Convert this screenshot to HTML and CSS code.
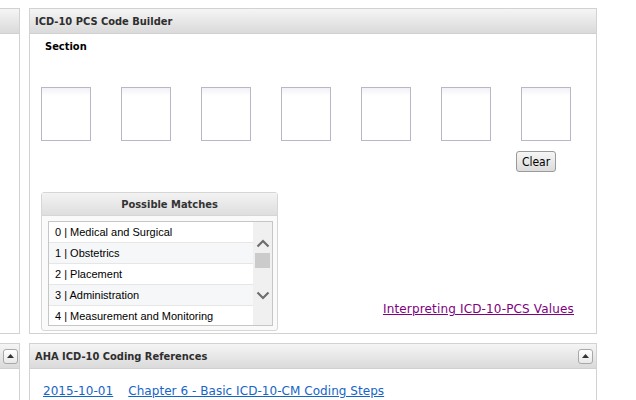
FILE: index.html
```html
<!DOCTYPE html>
<html>
<head>
<meta charset="utf-8">
<link rel="stylesheet" href="styles.css">
</head>
<body>
<div class="page">
  <div class="row row-top">
    <div class="side">
      <div class="side-head"></div>
      <div class="side-body"></div>
    </div>
    <div class="panel">
      <div class="panel-head"><span class="title">ICD-10 PCS Code Builder</span></div>
      <div class="panel-body builder">
        <div class="section-label">Section</div>
        <div class="boxes">
          <div class="box"></div><div class="box"></div><div class="box"></div><div class="box"></div><div class="box"></div><div class="box"></div><div class="box"></div>
        </div>
        <div class="clear-row"><button class="clear">Clear</button></div>
        <div class="bottom">
          <div class="matches">
            <div class="matches-head">Possible Matches</div>
            <div class="list">
              <div class="items">
                <div class="item">0 | Medical and Surgical</div>
                <div class="item alt">1 | Obstetrics</div>
                <div class="item">2 | Placement</div>
                <div class="item alt">3 | Administration</div>
                <div class="item">4 | Measurement and Monitoring</div>
              </div>
              <div class="scroll">
                <svg class="chev up" width="14" height="9" viewBox="0 0 14 9"><path d="M1.5 7.5 L7 2 L12.5 7.5" fill="none" stroke="#6e6e6e" stroke-width="2.2"/></svg>
                <div class="thumb"></div>
                <svg class="chev down" width="14" height="9" viewBox="0 0 14 9"><path d="M1.5 1.5 L7 7 L12.5 1.5" fill="none" stroke="#6e6e6e" stroke-width="2.2"/></svg>
              </div>
            </div>
          </div>
          <a class="visited" href="#">Interpreting ICD-10-PCS Values</a>
        </div>
      </div>
    </div>
  </div>
  <div class="row row-bottom">
    <div class="side">
      <div class="side-head"><span class="tog"><svg width="7" height="4" viewBox="0 0 7 4"><path d="M0 4 L3.5 0 L7 4 Z" fill="#333"/></svg></span></div>
      <div class="side-body"></div>
    </div>
    <div class="panel">
      <div class="panel-head"><span class="title">AHA ICD-10 Coding References</span><span class="tog"><svg width="7" height="4" viewBox="0 0 7 4"><path d="M0 4 L3.5 0 L7 4 Z" fill="#333"/></svg></span></div>
      <div class="panel-body refs">
        <a class="link" href="#">2015-10-01</a>
        <a class="link" href="#">Chapter 6 - Basic ICD-10-CM Coding Steps</a>
      </div>
    </div>
  </div>
</div>
</body>
</html>
```

FILE: styles.css
```css
html, body {
  margin: 0;
  padding: 0;
  background: #ffffff;
  overflow: hidden;
}
.page {
  padding-top: 8px;
  width: 636px;
  height: 392px;
  overflow: hidden;
  font-family: "DejaVu Sans", Verdana, sans-serif;
}
.row {
  display: flex;
  gap: 9px;
}
.row-bottom {
  margin-top: 9px;
}
.side {
  width: 19px;
  border-top: 1px solid #d2d2d2;
  border-right: 1px solid #d2d2d2;
  border-bottom: 1px solid #d2d2d2;
  display: flex;
  flex-direction: column;
}
.side-head {
  height: 24px;
  border-bottom: 1px solid #d0d0d0;
  background: linear-gradient(#f5f5f5, #dadada);
  display: flex;
  align-items: center;
  padding-left: 3px;
}
.side-body {
  flex: 1;
  background: #fff;
}
.row-top .side-body { height: 299px; }
.panel {
  width: 566px;
  border: 1px solid #d2d2d2;
  display: flex;
  flex-direction: column;
}
.panel-head {
  height: 24px;
  border-bottom: 1px solid #d0d0d0;
  background: linear-gradient(#f5f5f5, #dadada);
  display: flex;
  align-items: center;
  justify-content: space-between;
  padding: 0 3px 0 5px;
}
.title {
  font-family: "DejaVu Sans Condensed", "DejaVu Sans", sans-serif;
  font-weight: bold;
  font-size: 11px;
  color: #2e2e2e;
}
.tog {
  width: 13px;
  height: 13px;
  border: 1px solid #a8a8a8;
  border-radius: 3px;
  background: linear-gradient(#ffffff, #e8e8e8);
  display: flex;
  align-items: center;
  justify-content: center;
}
.tog svg { display: block; margin-top: -1px; }
.panel-body {
  background: #fff;
}
.builder {
  height: 299px;
  display: flex;
  flex-direction: column;
  padding: 0 0 0 11px;
  box-sizing: border-box;
}
.section-label {
  font-family: "DejaVu Sans Condensed", "DejaVu Sans", sans-serif;
  font-weight: bold;
  font-size: 11px;
  color: #000;
  margin: 6px 0 0 4px;
  line-height: 13px;
}
.boxes {
  display: flex;
  gap: 30px;
  margin-top: 34px;
}
.box {
  width: 48px;
  height: 52px;
  border: 1px solid #b7b7c8;
  background: linear-gradient(#f2f2f7 0, #ffffff 8px);
}
.clear-row {
  display: flex;
  justify-content: flex-end;
  padding-right: 40px;
  margin-top: 10px;
}
.clear {
  width: 40px;
  height: 21px;
  border: 1px solid #9a9a9a;
  border-radius: 3px;
  background: linear-gradient(#f6f6f6, #dcdcdc);
  font-family: "DejaVu Sans Condensed", "DejaVu Sans", sans-serif;
  font-size: 12px;
  color: #000;
  padding: 0;
}
.bottom {
  display: flex;
  justify-content: space-between;
  align-items: flex-end;
  margin-top: 20px;
  padding-right: 22px;
}
.matches {
  width: 235px;
  height: 137px;
  border: 1px solid #d6d6d6;
  border-radius: 3px;
  background: #fafafa;
  display: flex;
  flex-direction: column;
}
.matches-head {
  height: 22px;
  background: linear-gradient(#f3f3f3, #dedede);
  border-bottom: 1px solid #d6d6d6;
  font-family: "DejaVu Sans Condensed", "DejaVu Sans", sans-serif;
  font-weight: bold;
  font-size: 11px;
  color: #333;
  display: flex;
  align-items: center;
  justify-content: center;
  padding-left: 20px;
}
.list {
  margin: 5px 4px 0 6px;
  height: 103px;
  border: 1px solid #c6c6c6;
  display: flex;
  overflow: hidden;
  background: #fff;
}
.items {
  width: 204px;
}
.item {
  height: 20px;
  border-bottom: 1px solid #e6e6e6;
  font-family: "Liberation Sans", Arial, sans-serif;
  font-size: 11px;
  color: #000;
  line-height: 20px;
  padding-left: 6px;
  background: #fff;
}
.item.alt {
  background: #f6f7f9;
}
.scroll {
  flex: 1;
  background: #f0f0f0;
  display: flex;
  flex-direction: column;
  align-items: center;
}
.chev { display: block; }
.chev.up { margin-top: 17px; }
.thumb {
  width: 15px;
  height: 15px;
  background: #cbcbcb;
  margin-top: 5px;
}
.chev.down { margin-top: 23px; }
.visited {
  font-family: "DejaVu Sans", Verdana, sans-serif;
  font-size: 12px;
  letter-spacing: 0.16px;
  color: #800080;
  margin-bottom: 15px;
}
.refs {
  padding: 15px 0 0 13px;
  height: 30px;
  display: flex;
  gap: 15px;
}
.link {
  font-family: "DejaVu Sans", Verdana, sans-serif;
  font-size: 12px;
  letter-spacing: 0.05px;
  color: #1565c8;
}
```
